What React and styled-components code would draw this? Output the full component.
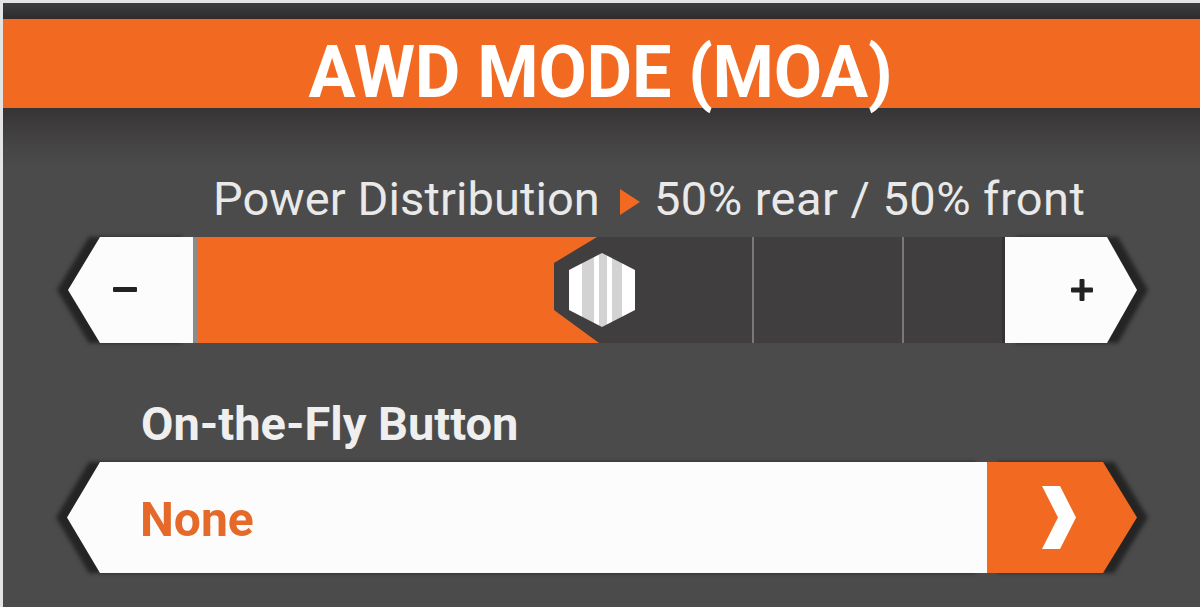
import React from "react";
import styled, { createGlobalStyle } from "styled-components";

const GlobalStyle = createGlobalStyle`
  html, body {
    margin: 0;
    padding: 0;
    background: #4b4b4b;
  }
  * { box-sizing: border-box; }
`;

const ORANGE = "#f26a21";
const WHITE = "#fcfcfc";
const TRACK = "#413e3f";

const Screen = styled.div`
  width: 1200px;
  height: 607px;
  overflow: hidden;
  border-top: 3px solid #e4e4e4;
  border-left: 3px solid #e4e4e4;
  background: #4b4b4b;
  display: flex;
  flex-direction: column;
  font-family: Roboto, "Noto Sans", "Liberation Sans", sans-serif;
`;

const TopStrip = styled.div`
  height: 16px;
  flex: none;
  background: linear-gradient(to bottom, #3b3e42, #2f2b29);
`;

const TitleBar = styled.header`
  height: 89px;
  flex: none;
  background: ${ORANGE};
  display: flex;
  justify-content: center;
  align-items: flex-start;
  padding-top: 18px;
`;

const Title = styled.h1`
  margin: 0 0 0 -3px;
  font-size: 72px;
  line-height: 72px;
  font-weight: 700;
  color: #ffffff;
  letter-spacing: -0.3px;
  transform: scaleX(0.975);
`;

const Body = styled.main`
  flex: 1;
  display: flex;
  flex-direction: column;
  background: linear-gradient(
    to bottom,
    #363435 0px,
    #3e3c3d 18px,
    #474647 40px,
    #4b4b4b 60px
  );
`;

const Caption = styled.div`
  margin: 68px 0 0 210px;
  font-size: 47px;
  line-height: 46px;
  letter-spacing: 0.1px;
  color: #e9e9e9;
  display: flex;
  align-items: center;
  white-space: nowrap;
`;

const Value = styled.span`
  letter-spacing: 0.45px;
`;

const Pointer = styled.svg`
  width: 20px;
  height: 26px;
  margin: 6px 14px 0 20px;
  flex: none;
`;

const SliderRow = styled.div`
  margin: 15px 0 0 65px;
  height: 106px;
  display: flex;
  align-items: stretch;
`;

const ShadowWrap = styled.div`
  display: flex;
  flex: none;
  filter: drop-shadow(${(p) => (p.$side === "left" ? "-11px" : "11px")} 0 2px #242424);
`;

const StepButton = styled.button`
  border: 0;
  padding: 0;
  width: ${(p) => p.$width}px;
  height: 100%;
  background: ${WHITE};
  display: flex;
  align-items: center;
  justify-content: ${(p) => (p.$side === "left" ? "flex-start" : "flex-end")};
  padding-left: ${(p) => (p.$side === "left" ? "45px" : "0")};
  padding-right: ${(p) => (p.$side === "right" ? "44px" : "0")};
  clip-path: ${(p) =>
    p.$side === "left"
      ? "polygon(32px 0, 100% 0, 100% 100%, 32px 100%, 0 50%)"
      : "polygon(0 0, calc(100% - 30px) 0, 100% 50%, calc(100% - 30px) 100%, 0 100%)"};
`;

const Separator = styled.div`
  width: 5px;
  flex: none;
  background: #8c8a8a;
`;

const Track = styled.div`
  position: relative;
  width: 807px;
  flex: none;
  display: flex;
  background: ${TRACK};
`;

const Fill = styled.div`
  background: ${ORANGE};
  flex: none;
`;

const Rest = styled.div`
  flex: 1;
  display: flex;
`;

const Segment = styled.div`
  flex: 0 0 ${(p) => p.$size}px;
  border-right: ${(p) => (p.$mark ? "2px solid #7a7879" : "0")};
`;

const TrackEnd = styled.div`
  flex: 1;
  border-right: 3px solid #353334;
`;

const Knob = styled.div`
  position: absolute;
  top: 0;
  width: 96px;
  height: 100%;
  margin-left: -48px;
  background: ${TRACK};
  clip-path: polygon(43px 0, 96px 0, 96px 106px, 45px 106px, 0 73px, 0 26px);
  display: flex;
  align-items: center;
  justify-content: center;
`;

const KnobFace = styled.div`
  width: 66px;
  height: 74px;
  clip-path: polygon(50% 0, 100% 23%, 100% 77%, 50% 100%, 0 77%, 0 23%);
  background: linear-gradient(
    90deg,
    #ffffff 0 13px,
    #d3d3d3 13px 25px,
    #ffffff 25px 30px,
    #d3d3d3 30px 38px,
    #ffffff 38px 43px,
    #d3d3d3 43px 53px,
    #ffffff 53px
  );
`;

const FieldLabel = styled.div`
  margin: 58px 0 0 138px;
  font-size: 47px;
  line-height: 46px;
  font-weight: 700;
  color: #efefef;
  letter-spacing: 0;
`;

const SelectRow = styled.div`
  margin: 15px 0 0 64px;
  height: 111px;
  display: flex;
`;

const SelectField = styled.div`
  width: 920px;
  background: ${WHITE};
  clip-path: polygon(33px 0, 100% 0, 100% 100%, 33px 100%, 0 50%);
  display: flex;
  align-items: center;
  padding: 4px 0 0 73px;
  font-size: 48px;
  font-weight: 700;
  color: #e56a2a;
`;

const SelectArrow = styled.div`
  width: 150px;
  background: ${ORANGE};
  clip-path: polygon(0 0, calc(100% - 34px) 0, 100% 50%, calc(100% - 34px) 100%, 0 100%);
  display: flex;
  align-items: center;
  padding-left: 55px;
`;

const Minus = () => (
  <svg width="24" height="6" viewBox="0 0 24 6">
    <rect x="0" y="0" width="24" height="5" rx="1" fill="#222" />
  </svg>
);

const Plus = () => (
  <svg width="22" height="22" viewBox="0 0 22 22">
    <rect x="0" y="8.5" width="22" height="5" rx="1" fill="#222" />
    <rect x="8.5" y="0" width="5" height="22" rx="1" fill="#222" />
  </svg>
);

const Chevron = () => (
  <svg width="34" height="63" viewBox="0 0 34 63">
    <polygon points="0,0 18,0 34,31.5 18,63 0,63 16,31.5" fill="#ffffff" />
  </svg>
);

export default function App() {
  const split = 50;
  const trackWidth = 807;
  const fillWidth = Math.round((trackWidth * split) / 100);

  return (
    <>
      <GlobalStyle />
      <Screen>
        <TopStrip />
        <TitleBar>
          <Title>AWD MODE (MOA)</Title>
        </TitleBar>
        <Body>
          <Caption>
            Power Distribution
            <Pointer viewBox="0 0 20 26">
              <polygon points="0,0 20,13 0,26" fill={ORANGE} />
            </Pointer>
            <Value>50% rear / 50% front</Value>
          </Caption>

          <SliderRow>
            <ShadowWrap $side="left">
              <StepButton $side="left" $width={125} aria-label="decrease">
                <Minus />
              </StepButton>
            </ShadowWrap>
            <Separator />
            <Track>
              <Fill style={{ width: fillWidth }} />
              <Rest>
                <Segment $size={152} $mark />
                <Segment $size={150} $mark />
                <TrackEnd />
              </Rest>
              <Knob style={{ left: fillWidth }}>
                <KnobFace />
              </Knob>
            </Track>
            <ShadowWrap $side="right">
              <StepButton $side="right" $width={132} aria-label="increase">
                <Plus />
              </StepButton>
            </ShadowWrap>
          </SliderRow>

          <FieldLabel>On-the-Fly Button</FieldLabel>

          <SelectRow>
            <ShadowWrap $side="left">
              <SelectField>None</SelectField>
            </ShadowWrap>
            <ShadowWrap $side="right">
              <SelectArrow>
                <Chevron />
              </SelectArrow>
            </ShadowWrap>
          </SelectRow>
        </Body>
      </Screen>
    </>
  );
}
